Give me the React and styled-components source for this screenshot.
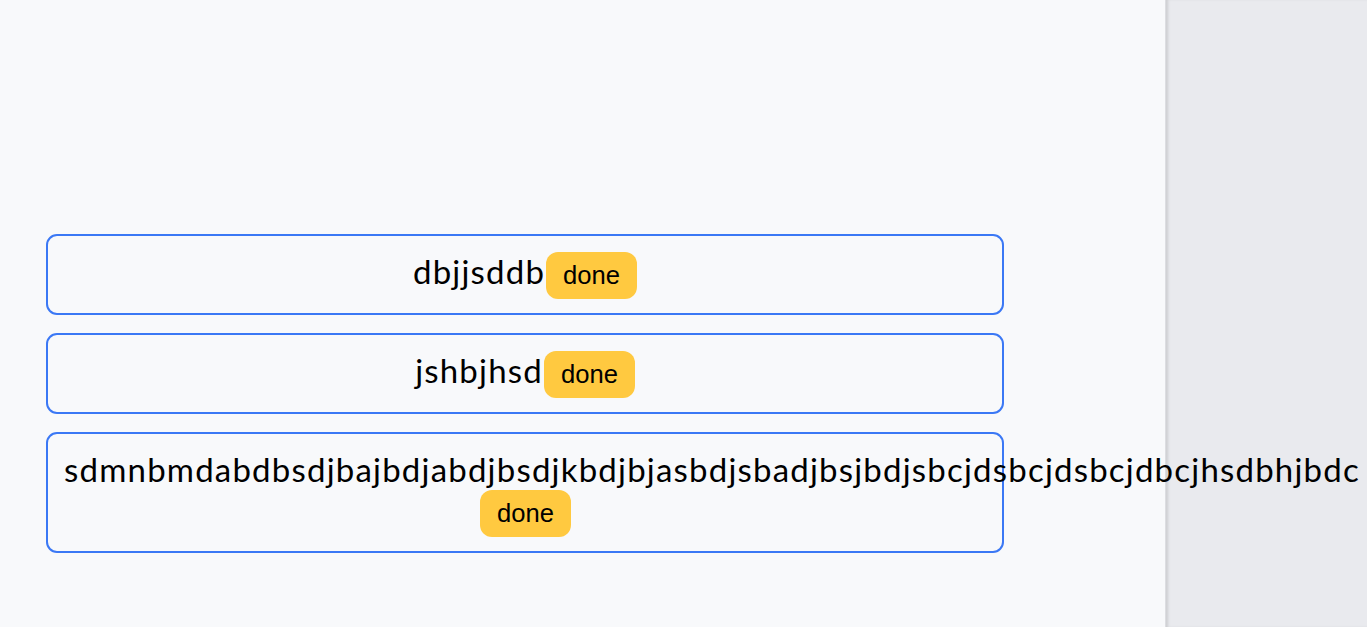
import React from 'react';
import styled, { createGlobalStyle } from 'styled-components';

const GlobalStyle = createGlobalStyle`
	html, body {
		margin: 0;
		padding: 0;
		height: 100%;
	}
	body {
		font-family: Lato, "Liberation Sans", sans-serif;
		background-color: #e9eaee;
		overflow: hidden;
	}
	#root {
		height: 100%;
	}
`;

const Layout = styled.div`
	display: flex;
	height: 627px;
	width: 1367px;
`;

const Main = styled.div`
	position: relative;
	z-index: 1;
	width: 1165px;
	flex-shrink: 0;
	background-color: #f8f9fb;
	padding: 234px 161px 0 46px;
	box-sizing: border-box;
	display: flex;
	flex-direction: column;
	gap: 18px;
`;

const Side = styled.div`
	flex: 1;
	background-color: #e9eaee;
	box-shadow: inset 3px 0 3px -1px rgba(0, 0, 0, 0.12);
	border-left: 1px solid #dcdde1;
`;

const Card = styled.div`
	border: 2px solid #3b78f5;
	border-radius: 11px;
	padding: 15px 16px 14px;
	text-align: center;
	font-size: 33px;
	letter-spacing: 1.2px;
	color: #000;
	line-height: 40px;
`;

const Badge = styled.span`
	display: inline-block;
	vertical-align: middle;
	margin-left: 1px;
	padding: 9px 17px;
	background-color: #ffc940;
	border-radius: 12px;
	font-family: "Liberation Sans", Arial, sans-serif;
	font-size: 25.6px;
	line-height: 29px;
	letter-spacing: 0;
	color: #000;
`;

const todos = [
	{ id: 1, text: 'dbjjsddb', done: true },
	{ id: 2, text: 'jshbjhsd', done: true },
	{ id: 3, text: 'sdmnbmdabdbsdjbajbdjabdjbsdjkbdjbjasbdjsbadjbsjbdjsbcjdsbcjdsbcjdbcjhsdbhjbdc', done: true },
];

export default function App() {
	return (
		<Layout>
			<GlobalStyle />
			<Main>
				{todos.map(todo => (
					<Card key={todo.id}>
						{todo.text}
						{todo.done ? <Badge>done</Badge> : null}
					</Card>
				))}
			</Main>
			<Side />
		</Layout>
	);
}
